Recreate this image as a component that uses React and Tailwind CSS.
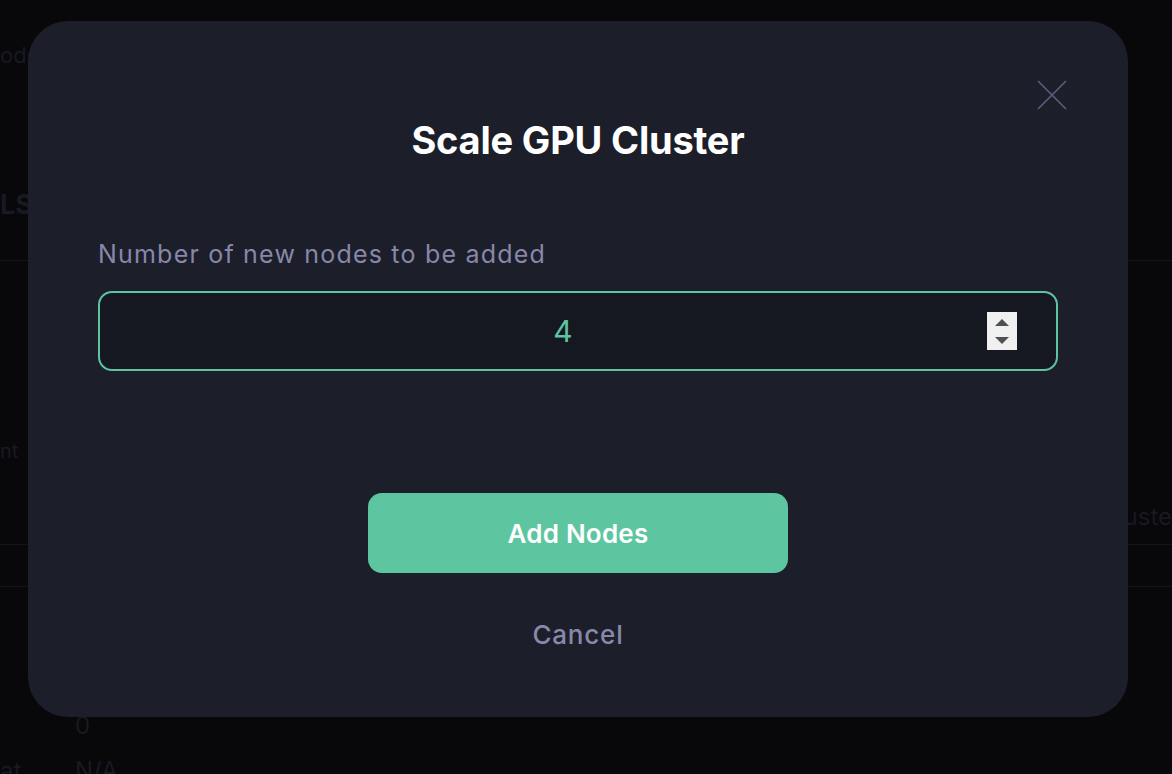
const Spinner = () => (
  <span className="absolute right-[39px] top-[19px] flex h-[38px] w-[30px] flex-col items-center justify-center gap-[11px] bg-[#f0f0f0]">
    <span className="h-0 w-0 border-x-[7px] border-b-[7px] border-x-transparent border-b-[#505050]" />
    <span className="h-0 w-0 border-x-[7px] border-t-[7px] border-x-transparent border-t-[#505050]" />
  </span>
);

const Backdrop = () => (
  <div className="text-[#1c1c25]">
    <div className="h-[40px]" />
    <div className="h-[150px] text-[22px] leading-[30px]">ode</div>
    <div className="h-[70px] text-[27px] font-bold leading-[30px]">LS</div>
    <div className="h-px bg-[#16161c]" />
    <div className="h-[175px]" />
    <div className="h-[50px] text-[20px] leading-[30px]">nt</div>
    <div className="flex h-[58px] items-start justify-end pt-[16px]">
      <span className="text-[24px] leading-[30px]">uste</span>
    </div>
    <div className="h-px bg-[#16161c]" />
    <div className="h-[41px]" />
    <div className="h-px bg-[#16161c]" />
    <div className="h-[124px]" />
    <div className="pl-[75px] text-[24px] leading-[30px]">0</div>
    <div className="mt-[15px] flex text-[24px] leading-[30px]">
      <span className="w-[75px]">at</span>
      <span>N/A</span>
    </div>
  </div>
);

export default function App() {
  return (
    <div className="relative h-[774px] w-full overflow-hidden bg-[#09090d] font-['Inter',sans-serif]">
      <Backdrop />
      <div className="absolute inset-0 bg-black/10 pl-[28px] pt-[21px]">
        <div className="relative flex h-[696px] w-[1100px] flex-col items-center rounded-[40px] bg-[#1c1e29] px-[70px] pt-[96px]">
          {/* close */}
          <button className="absolute right-[61px] top-[59px] text-[#5b5f7e]">
            <svg width="30" height="30" viewBox="0 0 30 30" fill="none" stroke="currentColor" strokeWidth="1.6">
              <path d="M1 1L29 29M29 1L1 29" />
            </svg>
          </button>
          <h1 className="text-[38px] font-bold leading-[46px] tracking-[-0.2px] text-white">
            Scale GPU Cluster
          </h1>
          <label className="mt-[75px] self-start text-[25px] leading-[32px] tracking-[1.2px] text-[#8688ab]">
            Number of new nodes to be added
          </label>
          <div className="relative mt-[21px] h-[80px] w-full rounded-[14px] border-2 border-[#5ec4a0] bg-[#161821]">
            <input
              type="text"
              value="4"
              readOnly
              className="h-full w-full bg-transparent pr-[30px] text-center text-[30px] text-[#5ec4a0] outline-none"
            />
            <Spinner />
          </div>
          <button className="mt-[122px] h-[80px] w-[420px] rounded-[14px] bg-[#5dc6a0] text-[26px] font-semibold tracking-[0.2px] text-white">
            Add Nodes
          </button>
          <button className="mt-[46px] text-[26px] font-medium leading-[32px] tracking-[0.8px] text-[#8789ab]">
            Cancel
          </button>
        </div>
      </div>
    </div>
  );
}
